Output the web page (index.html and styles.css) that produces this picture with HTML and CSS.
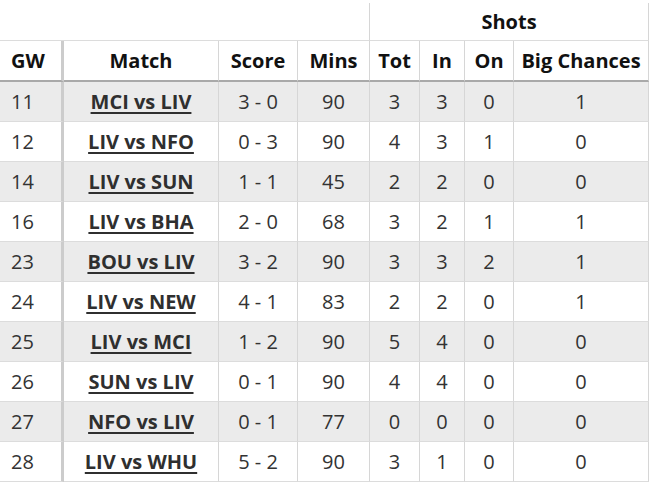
FILE: index.html
```html
<!DOCTYPE html>
<html>
<head>
<meta charset="utf-8">
<link rel="stylesheet" href="styles.css">
</head>
<body>
<table class="stats">
  <colgroup>
    <col class="w-gw">
    <col class="w-match">
    <col class="w-score">
    <col class="w-mins">
    <col class="w-tot">
    <col class="w-in">
    <col class="w-on">
    <col class="w-big">
  </colgroup>
  <thead>
    <tr class="group-row">
      <th class="blank" colspan="4"></th>
      <th class="group" colspan="4">Shots</th>
    </tr>
    <tr class="head-row">
      <th class="gw">GW</th>
      <th>Match</th>
      <th>Score</th>
      <th>Mins</th>
      <th>Tot</th>
      <th>In</th>
      <th>On</th>
      <th>Big Chances</th>
    </tr>
  </thead>
  <tbody>
    <tr><td class="gw">11</td><td><a href="#">MCI vs LIV</a></td><td>3 - 0</td><td>90</td><td>3</td><td>3</td><td>0</td><td>1</td></tr>
    <tr><td class="gw">12</td><td><a href="#">LIV vs NFO</a></td><td>0 - 3</td><td>90</td><td>4</td><td>3</td><td>1</td><td>0</td></tr>
    <tr><td class="gw">14</td><td><a href="#">LIV vs SUN</a></td><td>1 - 1</td><td>45</td><td>2</td><td>2</td><td>0</td><td>0</td></tr>
    <tr><td class="gw">16</td><td><a href="#">LIV vs BHA</a></td><td>2 - 0</td><td>68</td><td>3</td><td>2</td><td>1</td><td>1</td></tr>
    <tr><td class="gw">23</td><td><a href="#">BOU vs LIV</a></td><td>3 - 2</td><td>90</td><td>3</td><td>3</td><td>2</td><td>1</td></tr>
    <tr><td class="gw">24</td><td><a href="#">LIV vs NEW</a></td><td>4 - 1</td><td>83</td><td>2</td><td>2</td><td>0</td><td>1</td></tr>
    <tr><td class="gw">25</td><td><a href="#">LIV vs MCI</a></td><td>1 - 2</td><td>90</td><td>5</td><td>4</td><td>0</td><td>0</td></tr>
    <tr><td class="gw">26</td><td><a href="#">SUN vs LIV</a></td><td>0 - 1</td><td>90</td><td>4</td><td>4</td><td>0</td><td>0</td></tr>
    <tr><td class="gw">27</td><td><a href="#">NFO vs LIV</a></td><td>0 - 1</td><td>77</td><td>0</td><td>0</td><td>0</td><td>0</td></tr>
    <tr><td class="gw">28</td><td><a href="#">LIV vs WHU</a></td><td>5 - 2</td><td>90</td><td>3</td><td>1</td><td>0</td><td>0</td></tr>
  </tbody>
</table>
</body>
</html>
```

FILE: styles.css
```css
html, body {
  margin: 0;
  padding: 0;
  background: #ffffff;
}

body {
  font-family: "Open Sans", "Liberation Sans", sans-serif;
  font-size: 20px;
  color: #333333;
}

.stats {
  margin-top: 3px;
  border-collapse: separate;
  border-spacing: 0;
  table-layout: fixed;
  width: 649px;
}

.stats th,
.stats td {
  box-sizing: border-box;
  padding: 0;
  text-align: center;
  vertical-align: middle;
  white-space: nowrap;
  line-height: 24px;
  border-right: 1px solid #d6d6d6;
  border-bottom: 1px solid #dcdcdc;
}

.group-row th {
  height: 38px;
  font-weight: 700;
  color: #111111;
}

.head-row th {
  height: 41px;
  font-weight: 700;
  color: #111111;
  border-bottom: 2px solid #a9a9a9;
}

.stats td {
  height: 40px;
}

.stats .gw {
  text-align: left;
  padding-left: 11px;
  border-right: 3px solid #cccccc;
}

.stats tbody tr:nth-child(odd) td {
  background: #ebebeb;
}

.stats a {
  color: #2f2f2f;
  font-weight: 700;
  text-decoration: underline;
  text-underline-offset: 3px;
}

.w-gw { width: 64px; }
.w-match { width: 155px; }
.w-score { width: 79px; }
.w-mins { width: 72px; }
.w-tot { width: 50px; }
.w-in { width: 45px; }
.w-on { width: 49px; }
.w-big { width: 135px; }
```
